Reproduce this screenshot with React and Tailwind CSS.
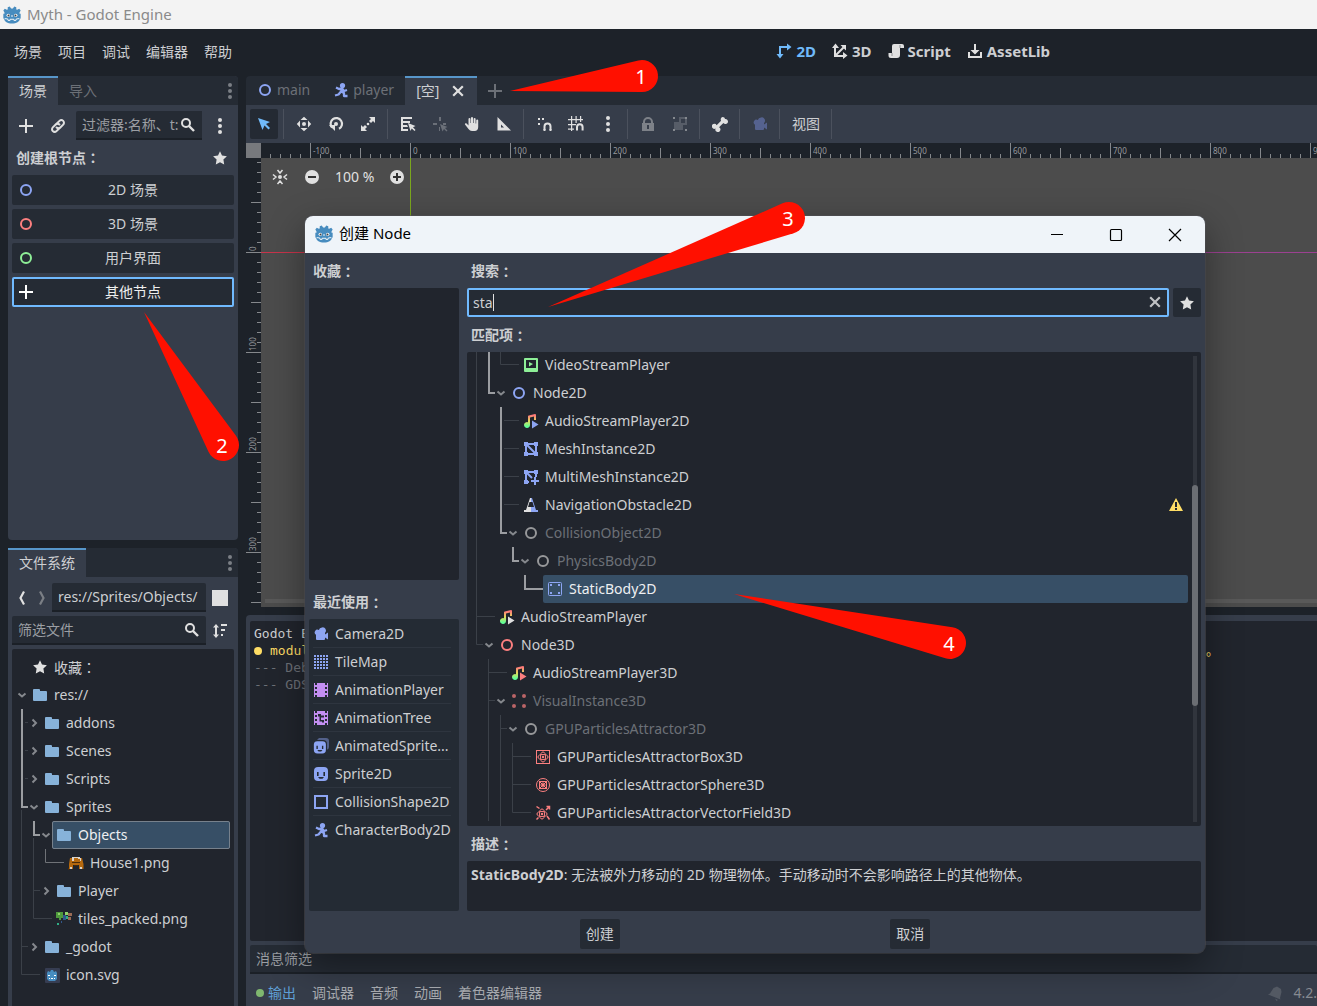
import React from "react";
import clsx from "clsx";

const BLUE = "#8da5f3";
const RED = "#fc7f7f";
const GREEN = "#8eef97";
const PURPLE = "#c38ef1";
const LIGHT = "#e0e0e0";

function Icon({ size = 16, color = LIGHT, className, children }) {
  return (
    <svg
      width={size}
      height={size}
      viewBox="0 0 16 16"
      fill={color}
      className={clsx("shrink-0", className)}
      aria-hidden="true"
    >
      {children}
    </svg>
  );
}

const Ring = ({ color }) => (
  <Icon>
    <circle cx="8" cy="8" r="5" fill="none" stroke={color} strokeWidth="2" />
  </Icon>
);

const Plus = ({ color }) => (
  <Icon color={color}>
    <path d="M7 1v6H1v2h6v6h2V9h6V7H9V1z" />
  </Icon>
);

const Close = ({ color = LIGHT }) => (
  <Icon>
    <path d="M3.2 3.2l9.6 9.6M12.8 3.2l-9.6 9.6" stroke={color} strokeWidth="2.2" />
  </Icon>
);

const Dots = ({ color }) => (
  <Icon color={color}>
    <circle cx="8" cy="2" r="2" />
    <circle cx="8" cy="8" r="2" />
    <circle cx="8" cy="14" r="2" />
  </Icon>
);

const Star = () => (
  <Icon>
    <path d="M8 1.2l2 4.3 4.9.7-3.5 3.4.8 5-4.2-2.3-4.2 2.3.8-5L1.1 6.2 6 5.5z" />
  </Icon>
);

const Search = () => (
  <Icon>
    <circle cx="6" cy="6" r="4" fill="none" stroke={LIGHT} strokeWidth="2" />
    <path d="M9 9l5 5" stroke={LIGHT} strokeWidth="2.4" />
  </Icon>
);

const Chain = () => (
  <Icon>
    <g fill="none" stroke={LIGHT} strokeWidth="2" strokeLinecap="round">
      <path d="M6.600 5.800l2.900-2.900a2.600 2.600 0 0 1 3.700 3.700l-2.900 2.900a2.600 2.600 0 0 1-3.700 0" />
      <path d="M9.400 10.200l-2.900 2.900a2.600 2.600 0 0 1-3.700-3.700l2.900-2.900a2.600 2.600 0 0 1 3.700 0" />
    </g>
  </Icon>
);

const Folder = () => (
  <Icon color="#87b2d9">
    <path d="M1 3a1 1 0 0 1 1-1h5a1 1 0 0 1 1 1v1h6a1 1 0 0 1 1 1v8a1 1 0 0 1-1 1H2a1 1 0 0 1-1-1z" />
  </Icon>
);

const GodotHead = ({ size = 18 }) => (
  <Icon size={size} color="#478cbf">
    <path d="M6 .4l1.200 1.900h1.600L10 .4l1.800.7v1.900l.8.400 1.800-.9 1.300 1.500-1 1.700v1.200h1V11l-.7.400c-.2 2.700-3 4.200-7 4.200S1.200 14.100 1 11.400L.3 11V6.900h1V5.700l-1-1.700 1.300-1.500 1.800.9.800-.4V1.100z" />
    <circle cx="4.700" cy="8.300" r="1.500" fill="#fff" />
    <circle cx="11.300" cy="8.300" r="1.500" fill="#fff" />
    <circle cx="4.900" cy="8.400" r=".9" fill="#414042" />
    <circle cx="11.100" cy="8.400" r=".9" fill="#414042" />
    <path d="M7.600 8h.8v1.800h-.8z" fill="#fff" />
    <path d="M1.500 11.200l2.700.3.300 1.300h1.800v-1h3.400v1h1.800l.3-1.300 2.700-.3" fill="none" stroke="#fff" strokeWidth=".8" />
  </Icon>
);

const Runner = () => (
  <Icon color={BLUE}>
    <circle cx="9.500" cy="3.500" r="2.600" />
    <path
      d="M9.500 5.500L8 10M3 5.500l3 1.500 3-.5 2 2.500 3-1M8 9.500l3 1.500v3h3.500M8 9.500L5.500 12.500 2 13.500"
      fill="none"
      stroke={BLUE}
      strokeWidth="2.300"
      strokeLinejoin="round"
    />
  </Icon>
);

const Camera = ({ color = BLUE }) => (
  <Icon color={color}>
    <path d="M9 1.500a3.200 3.200 0 0 0-3.100 2.600A2.700 2.700 0 1 0 3 8.700V13a1 1 0 0 0 1 1h7a1 1 0 0 0 1-1v-1.500l3 2V6.500l-3 2v-1.600A3.200 3.200 0 0 0 9 1.500z" />
  </Icon>
);

const TileMap = () => (
  <Icon color={BLUE}>
    {[1, 4, 7, 10, 13].map((x) =>
      [1, 4, 7, 10, 13].map((y) => (
        <rect key={x + "-" + y} x={x} y={y} width="2" height="2" />
      ))
    )}
  </Icon>
);

const Film = ({ tree }) => (
  <Icon color={PURPLE}>
    <path
      fillRule="evenodd"
      d="M1 1h1v2h2V1h8v2h2V1h1v14h-1v-2h-2v2H4v-2H2v2H1zM2 5v2h2V5zM2 9v2h2V9zM12 5v2h2V5zM12 9v2h2V9z"
    />
    {tree && (
      <path d="M5 4h3v1.500h3v2H8V10h3v2.500H9v-1H6.500V6.500H5z" fill="#242b34" />
    )}
  </Icon>
);

const Sprite = ({ animated }) => (
  <Icon color={BLUE}>
    {animated && (
      <path d="M6 0h7a3 3 0 0 1 3 3v6a3 3 0 0 1-2 2.800V6a4 4 0 0 0-4-4H4z" opacity=".45" />
    )}
    <g transform={animated ? "translate(0 2.500) scale(.86)" : undefined}>
      <rect x="1" y="1" width="14" height="14" rx="4" />
      <path
        d="M4 6h1.600v4H4zM10.400 6H12v4h-1.600zM5 11h6l-1.500 1.800h-3z"
        fill="#242b34"
      />
    </g>
  </Icon>
);

const CollisionShape = () => (
  <Icon>
    <rect x="2" y="2" width="12" height="12" fill="none" stroke={BLUE} strokeWidth="2" />
  </Icon>
);

const VideoPlayer = () => (
  <Icon color={GREEN}>
    <path
      fillRule="evenodd"
      d="M2 1h12a1 1 0 0 1 1 1v12a1 1 0 0 1-1 1H2a1 1 0 0 1-1-1V2a1 1 0 0 1 1-1zM3 3v8h10V3zM6 5l4 2-4 2.500z"
    />
  </Icon>
);

const AudioPlayer = ({ color = LIGHT }) => (
  <Icon>
    <defs>
      <linearGradient id="note" x1="0" y1="1" x2="0" y2="15" gradientUnits="userSpaceOnUse">
        <stop offset=".1" stopColor="#ff7a7a" />
        <stop offset=".5" stopColor="#e1da5b" />
        <stop offset=".9" stopColor="#5fff97" />
      </linearGradient>
    </defs>
    <path
      fill="url(#note)"
      d="M12 1a1 1 0 0 1 1 1v5h-2V3.500l-4 1V12a3 3 0 1 1-2-2.800V3.600a1 1 0 0 1 .8-1z"
    />
    <path d="M9 7.500l6.500 4L9 15.500z" fill={color} />
  </Icon>
);

const Mesh = ({ multi }) => (
  <Icon color={BLUE}>
    <path
      d={multi ? "M3 3h10v5M3 3v10h3M3 3l6 6" : "M3 3h10v10H3zM3 3l10 10"}
      fill="none"
      stroke={BLUE}
      strokeWidth="2"
    />
    <path d="M1 1h4v4H1zM11 1h4v4h-4zM1 11h4v4H1z" />
    <path d={multi ? "M11 8h2v3h3v2h-3v3h-2v-3H8v-2h3z" : "M11 11h4v4h-4z"} />
  </Icon>
);

const Obstacle = () => (
  <Icon>
    <path d="M7 1h1v12h7v2H1v-2h2z" />
    <path d="M8 1h1l4 12h2v2H8z" fill={BLUE} />
    <path d="M6.500 5h3L11 10H5z" fill="#21252d" />
  </Icon>
);

const StaticBody = () => (
  <Icon color={BLUE}>
    <rect x="1.500" y="1.500" width="13" height="13" rx="1" fill="none" stroke={BLUE} />
    <path d="M3 3h2v2H3zM11 3h2v2h-2zM3 11h2v2H3zM11 11h2v2h-2z" />
  </Icon>
);

const VisualInstance = () => (
  <Icon color="#b96466">
    <circle cx="3" cy="3" r="2" />
    <circle cx="13" cy="3" r="2" />
    <circle cx="3" cy="13" r="2" />
    <circle cx="13" cy="13" r="2" />
  </Icon>
);

const Attractor = ({ kind }) => (
  <Icon>
    <g fill="none" stroke={RED}>
      {kind === "box" && (
        <>
          <rect x="1.500" y="1.500" width="13" height="13" />
          <ellipse cx="8" cy="8" rx="5" ry="2.500" />
          <ellipse cx="8" cy="8" rx="2.500" ry="5" />
        </>
      )}
      {kind === "sphere" && (
        <>
          <circle cx="8" cy="8" r="6.500" />
          <rect x="4.500" y="4.500" width="7" height="7" />
          <path d="M4.500 4.500l7 7M11.500 4.500l-7 7" />
          <circle cx="8" cy="8" r="2" />
        </>
      )}
      {kind === "vector" && (
        <>
          <path d="M1.500 1.500l3 2M11 5l3.500-3.500M11.500 1.500h3v3M12 11l2.500 3.500M1.500 14.500l2-2" strokeWidth="1.500" />
          <ellipse cx="7" cy="9" rx="5" ry="2.500" />
          <ellipse cx="7" cy="9" rx="2.500" ry="5" />
        </>
      )}
    </g>
    <circle cx={kind === "vector" ? 7 : 8} cy={kind === "vector" ? 9 : 8} r="1.200" fill={RED} />
  </Icon>
);

const House = () => (
  <Icon color="#b5690f">
    <path d="M2 3h12l1.500 6v5H11v-4H5v4H1V9z" />
    <path d="M4 2h8v2h-2V3H6v3H4zM12 3h1v3h-1zM2 12h2v2H2zM12 12h2v2h-2z" fill="#d8d3cc" />
    <path d="M0 13h1v2H0zM6 10h4v1H6zM4 7h8v1H4z" fill="#4a2c0c" />
  </Icon>
);

const Tiles = () => (
  <Icon color="#4f9a3d">
    <path d="M0 1h7v6H5v2H3V7H0z" />
    <path d="M2 2h2v2H2zM9 1h3v3H9z" fill="#8fd46a" />
    <path d="M7 4h3v5H7zM5 10h1v2H5z" fill="#31588c" />
    <path d="M12 2h4v3h-4zM12 6h3v3h-3z" fill="#9a6b55" />
    <path d="M10 5h2v3h-2zM1 12h2v2H1z" fill="#2fae86" />
  </Icon>
);

const IconSvg = () => (
  <svg width="16" height="16" viewBox="0 0 16 16" className="shrink-0" aria-hidden="true">
    <rect x="1" y="1" width="15" height="15" rx="1" fill="#363d52" />
    <path d="M3 6l1-2 2 1 1-2h2l1 2 2-1 1 2v6l-2 2H5l-2-2z" fill="#478cbf" />
    <path d="M4 8h2v1H4zM10 8h2v1h-2zM5 11h1v1H5zM7 11h2v1H7zM10 11h1v1h-1z" fill="#fff" />
  </svg>
);

const Chevron = ({ open }) => (
  <svg width="12" height="12" viewBox="0 0 12 12" className="shrink-0" aria-hidden="true">
    <path
      d={open ? "M2.500 4.500L6 7.500l3.500-3" : "M4.500 2.500L8 6 4.500 9.500"}
      fill="none"
      stroke="#85888d"
      strokeWidth="2"
    />
  </svg>
);

const toolIcons = {
  select: (
    <Icon color="#70bafa">
      <path d="M2 2l4.500 12 2-4.500 4 4 1.500-1.500-4-4L14 6z" />
    </Icon>
  ),
  move: (
    <Icon>
      <circle cx="8" cy="8" r="2" />
      <path d="M8 .8L11.500 4h-7zM8 15.200L11.500 12h-7zM.8 8L4 4.500v7zM15.200 8L12 4.500v7z" />
    </Icon>
  ),
  rotate: (
    <Icon>
      <path d="M4 11.500A5.700 5.700 0 1 1 11 12.800" fill="none" stroke={LIGHT} strokeWidth="2.200" />
      <path d="M1 9h6v6z" />
      <circle cx="8" cy="8" r="2" />
    </Icon>
  ),
  scale: (
    <Icon>
      <path d="M9 1h6v6l-2-2-2 2-2-2 2-2zM7 15H1V9l2 2 2-2 2 2-2 2z" />
      <circle cx="8" cy="8" r="1.300" />
    </Icon>
  ),
  list: (
    <Icon>
      <path d="M1 1h11v2H3v2h7v2H3v2h4l1 2H3v2h5v2H1z" />
      <path d="M8 7l7.500 3-2.500 1.200 2.500 2.800-1 1-2.800-2.500L10.500 15z" />
    </Icon>
  ),
  pivot: (
    <Icon color="#6b7079">
      <path d="M7 1h2v4H7zM1 7h4v2H1zM11 7h3v2h-3zM7 11h1v4H7z" />
      <path d="M8 8l7.500 3-2.500 1 2.500 2.500-1 1L12 13l-1.500 2.500z" />
    </Icon>
  ),
  pan: (
    <Icon>
      <path d="M7 2a1 1 0 0 1 2 0v5h.6V3a1 1 0 0 1 2 0v4.500h.6V4.500a1 1 0 0 1 2 0V11c0 2.500-1.500 4-3.500 4H8c-1.500 0-2.500-.7-3.500-2L1 8.500c-.5-1 .8-1.800 1.600-1L4.500 9.500V3a1 1 0 0 1 2 0v4H7z" />
    </Icon>
  ),
  ruler: (
    <Icon>
      <path fillRule="evenodd" d="M1.500 1L15 14.500H1.500zM5 8.500v3h3z" />
    </Icon>
  ),
  snap: (
    <Icon>
      <path d="M2 2h2v2H2zM6 2h2v2H6zM2 7h2v2H2z" />
      <path d="M8.500 14V10.500a3 3 0 0 1 6 0V14" fill="none" stroke={LIGHT} strokeWidth="2" />
      <path d="M7.500 13h2v2h-2zM13.500 13h2v2h-2z" />
    </Icon>
  ),
  gridSnap: (
    <Icon>
      <path d="M0 3h15v1.200H0zM0 8h8v1.200H0zM0 12.500h6v1.200H0zM3 0h1.200v15H3zM7.500 0h1.200v7H7.500zM12 0h1.200v6H12z" />
      <path d="M9 14.500V11a2.800 2.800 0 0 1 5.600 0v3.500" fill="none" stroke={LIGHT} strokeWidth="2" />
    </Icon>
  ),
  more: <Dots />,
  lock: (
    <Icon color="#7d8188">
      <path
        fillRule="evenodd"
        d="M8 1a5 5 0 0 0-5 5v1H2v8h12V7h-1V6a5 5 0 0 0-5-5zm0 2a3 3 0 0 1 3 3v1H5V6a3 3 0 0 1 3-3zM7 9h2v4H7z"
      />
    </Icon>
  ),
  group: (
    <Icon color="#575d68">
      <path d="M7 1h8v8h-4v5H2V6h5zM9 3v4h4V3z" fillRule="evenodd" />
      <path d="M1 1h2v2H1zM13 1h2v2h-2zM1 13h2v2H1zM13 13h2v2h-2z" fill="#85898f" />
    </Icon>
  ),
  bone: (
    <Icon>
      <path d="M10.500 1a2.500 2.500 0 0 0-1.400 3.700L4.600 9.200a2.500 2.500 0 1 0-1 3.300 2.500 2.500 0 1 0 3.400-1.200l4.400-4.400a2.500 2.500 0 1 0 1.700-3.900A2.500 2.500 0 0 0 10.500 1z" />
    </Icon>
  ),
  camera: <Camera color="#55628f" />,
};

const TOOLS = [
  ["select"],
  ["move", "rotate", "scale"],
  ["list", "pivot", "pan", "ruler"],
  ["snap", "gridSnap", "more"],
  ["lock", "group"],
  ["bone"],
  ["camera"],
];

function Separator() {
  return (
    <span className="flex h-[30px] w-1 shrink-0 pl-px">
      <span className="w-px bg-[#4b515d]" />
    </span>
  );
}

// Full-width colon that sits in the middle of its cell.
function Colon() {
  return <span className="font-['Noto_Sans_CJK_TC',sans-serif]">：</span>;
}

function TreeRow({ item }) {
  return (
    <li className="flex h-7 items-center" style={{ paddingLeft: 4 + item.depth * 12 }}>
      <span className="w-3 shrink-0">
        {item.arrow && <Chevron open={item.arrow === "open"} />}
      </span>
      <span
        className={clsx(
          "flex h-full min-w-0 flex-1 items-center gap-1.5 whitespace-nowrap rounded-xs pl-1",
          item.selected && "bg-[#374f66] text-[#eef0f2]",
          item.outlined && "outline -outline-offset-1 outline-[#77818c]",
          item.dim && "text-[#6c7077]"
        )}
      >
        {item.icon}
        <span>
          {item.label}
          {item.colon && <Colon />}
        </span>
        {item.warning && (
          <Icon color="#ffdd65" className="ml-auto mr-1">
            <path fillRule="evenodd" d="M8 1l7 13H1zM7 5v5h2V5zM7 11v2h2v-2z" />
          </Icon>
        )}
      </span>
    </li>
  );
}

function Tree({ items, thin, mid, thick }) {
  return (
    <div className="relative min-w-0 flex-1">
      <svg className="absolute inset-0 h-full w-full" fill="none" aria-hidden="true">
        <path d={thin} stroke="#3b4048" />
        {mid && <path d={mid} stroke="#6f7277" />}
        <path d={thick} stroke="#9b9da1" strokeWidth="2" />
      </svg>
      <ul className="relative">
        {items.map((item) => (
          <TreeRow key={item.label} item={item} />
        ))}
      </ul>
    </div>
  );
}

const FILES = [
  { depth: 0, label: "收藏", icon: <Star />, colon: true },
  { depth: 0, label: "res://", icon: <Folder />, arrow: "open" },
  { depth: 1, label: "addons", icon: <Folder />, arrow: "closed" },
  { depth: 1, label: "Scenes", icon: <Folder />, arrow: "closed" },
  { depth: 1, label: "Scripts", icon: <Folder />, arrow: "closed" },
  { depth: 1, label: "Sprites", icon: <Folder />, arrow: "open" },
  { depth: 2, label: "Objects", icon: <Folder />, arrow: "open", selected: true, outlined: true },
  { depth: 3, label: "House1.png", icon: <House /> },
  { depth: 2, label: "Player", icon: <Folder />, arrow: "closed" },
  { depth: 2, label: "tiles_packed.png", icon: <Tiles /> },
  { depth: 1, label: "_godot", icon: <Folder />, arrow: "closed" },
  { depth: 1, label: "icon.svg", icon: <IconSvg /> },
];

const NODES = [
  { depth: 3, label: "VideoStreamPlayer", icon: <VideoPlayer /> },
  { depth: 2, label: "Node2D", icon: <Ring color={BLUE} />, arrow: "open" },
  { depth: 3, label: "AudioStreamPlayer2D", icon: <AudioPlayer color={BLUE} /> },
  { depth: 3, label: "MeshInstance2D", icon: <Mesh /> },
  { depth: 3, label: "MultiMeshInstance2D", icon: <Mesh multi /> },
  { depth: 3, label: "NavigationObstacle2D", icon: <Obstacle />, warning: true },
  { depth: 3, label: "CollisionObject2D", icon: <Ring color="#97989a" />, arrow: "open", dim: true },
  { depth: 4, label: "PhysicsBody2D", icon: <Ring color="#97989a" />, arrow: "open", dim: true },
  { depth: 5, label: "StaticBody2D", icon: <StaticBody />, selected: true },
  { depth: 1, label: "AudioStreamPlayer", icon: <AudioPlayer /> },
  { depth: 1, label: "Node3D", icon: <Ring color={RED} />, arrow: "open" },
  { depth: 2, label: "AudioStreamPlayer3D", icon: <AudioPlayer color={RED} /> },
  { depth: 2, label: "VisualInstance3D", icon: <VisualInstance />, arrow: "open", dim: true },
  { depth: 3, label: "GPUParticlesAttractor3D", icon: <Ring color="#97989a" />, arrow: "open", dim: true },
  { depth: 4, label: "GPUParticlesAttractorBox3D", icon: <Attractor kind="box" /> },
  { depth: 4, label: "GPUParticlesAttractorSphere3D", icon: <Attractor kind="sphere" /> },
  { depth: 4, label: "GPUParticlesAttractorVectorField3D", icon: <Attractor kind="vector" /> },
];

const RECENT = [
  { label: "Camera2D", icon: <Camera /> },
  { label: "TileMap", icon: <TileMap /> },
  { label: "AnimationPlayer", icon: <Film /> },
  { label: "AnimationTree", icon: <Film tree /> },
  { label: "AnimatedSprite...", icon: <Sprite animated /> },
  { label: "Sprite2D", icon: <Sprite /> },
  { label: "CollisionShape2D", icon: <CollisionShape /> },
  { label: "CharacterBody2D", icon: <Runner /> },
];

function TitleBar() {
  return (
    <header className="flex h-[29px] shrink-0 items-center gap-1.5 bg-[#f3f3f3] px-[3px] text-[15px] text-[#8a8a8a]">
      <GodotHead />
      <h1>Myth - Godot Engine</h1>
    </header>
  );
}

function MenuBar() {
  const modes = [
    {
      label: "2D",
      active: true,
      icon: (
        <Icon color="#70bafa">
          <path d="M3 11V3h8V0.500l4.500 3.500L11 7.500V5H5v6h2.500L4 15.500.5 11z" />
        </Icon>
      ),
    },
    {
      label: "3D",
      icon: (
        <Icon>
          <path d="M3 5v8h8M3.500 12.500l8-8" fill="none" stroke={LIGHT} strokeWidth="2" />
          <path d="M3.500.5L7 5H0zM15.500 12.500L11 9v7zM14 2v5.500L8.500 2z" />
        </Icon>
      ),
    },
    {
      label: "Script",
      icon: (
        <Icon>
          <path d="M6 1h8a2 2 0 0 1 2 2v2h-4v7a3 3 0 0 1-3 3H3a2.500 2.500 0 0 1-2.500-2.500V10H4V3a2 2 0 0 1 2-2z" />
          <path d="M12 2v3M4 10v3" stroke="#8f9195" />
        </Icon>
      ),
    },
    {
      label: "AssetLib",
      icon: (
        <Icon>
          <path d="M7 1h2v6h3.500L8 11.500 3.500 7H7z" />
          <path d="M2 9v5h12V9" fill="none" stroke={LIGHT} strokeWidth="2" />
        </Icon>
      ),
    },
  ];

  return (
    <div className="flex h-[47px] shrink-0 items-center whitespace-nowrap pb-0.5">
      <nav className="flex gap-4 pl-3.5">
        {["场景", "项目", "调试", "编辑器", "帮助"].map((item) => (
          <button key={item}>{item}</button>
        ))}
      </nav>
      <nav className="ml-auto mr-[267px] flex gap-4 text-[15px] font-bold">
        {modes.map((mode) => (
          <button
            key={mode.label}
            className={clsx("flex items-center gap-1", mode.active && "text-[#70bafa]")}
          >
            {mode.icon}
            {mode.label}
          </button>
        ))}
      </nav>
    </div>
  );
}

function DockTabs({ tabs }) {
  return (
    <div className="flex h-[29px] shrink-0 items-stretch rounded-t-sm bg-[#252b34]">
      {tabs.map((tab, i) => (
        <button
          key={tab}
          className={clsx(
            "border-t-2 px-[11px] pb-0.5",
            i === 0 ? "border-[#5796c9] bg-[#363d4a]" : "border-transparent text-[#6c7077]"
          )}
        >
          {tab}
        </button>
      ))}
      <button aria-label="菜单" className="ml-auto">
        <Dots color="#7b7f85" />
      </button>
    </div>
  );
}

const field =
  "h-[29px] w-full min-w-0 rounded-t-xs border-b-2 border-[#1b2027] bg-[#252b34] px-1.5 outline-none placeholder:text-[#9b9ea3]";

function SceneDock() {
  const roots = [
    { label: "2D 场景", icon: <Ring color={BLUE} /> },
    { label: "3D 场景", icon: <Ring color={RED} /> },
    { label: "用户界面", icon: <Ring color={GREEN} /> },
    { label: "其他节点", icon: <Plus color="#ffffff" />, focused: true },
  ];

  return (
    <section className="flex min-h-0 flex-[464_1_0%] flex-col rounded-sm bg-[#363d4a]">
      <DockTabs tabs={["场景", "导入"]} />
      <div className="flex items-center gap-4 px-2.5 pt-1.5">
        <button aria-label="添加">
          <Plus />
        </button>
        <button aria-label="实例化">
          <Chain />
        </button>
        <div className="relative -ml-1.5 min-w-0 flex-1">
          <input aria-label="过滤器" placeholder="过滤器:名称、t:" className={field} />
          <span className="absolute right-0 top-0 flex h-[27px] w-[22px] items-center bg-[#252b34]">
            <Search />
          </span>
        </div>
        <button aria-label="更多" className="-ml-1.5">
          <Dots />
        </button>
      </div>
      <div className="flex h-[35px] items-center justify-between pl-2 pr-2.5 font-bold">
        <h2>
          创建根节点
          <Colon />
        </h2>
        <Star />
      </div>
      <div className="flex flex-col gap-1 px-1">
        {roots.map((root) => (
          <button
            key={root.label}
            className={clsx(
              "flex h-[30px] items-center rounded-xs border-2 bg-[#252b34] px-1",
              root.focused ? "border-[#70baff] text-[#eeeeee]" : "border-[#252b34]"
            )}
          >
            {root.icon}
            <span className="flex-1 pl-1">{root.label}</span>
          </button>
        ))}
      </div>
    </section>
  );
}

function FileDock() {
  return (
    <section className="flex min-h-0 flex-[458_1_0%] flex-col rounded-t-sm bg-[#363d4a]">
      <DockTabs tabs={["文件系统"]} />
      <div className="flex items-center gap-1 px-1 pt-1.5">
        <button aria-label="后退" className="w-4">
          <Icon>
            <path d="M12 1.500L8.500 8l3.500 6.500" fill="none" stroke={LIGHT} strokeWidth="2.200" />
          </Icon>
        </button>
        <button aria-label="前进" className="w-4">
          <Icon>
            <path d="M8 1.500L11.500 8 8 14.500" fill="none" stroke="#7b7f85" strokeWidth="2.200" />
          </Icon>
        </button>
        <input aria-label="路径" defaultValue="res://Sprites/Objects/" className={field} />
        <button aria-label="分栏" className="ml-0.5 mr-1.5">
          <Icon>
            <rect width="16" height="16" />
          </Icon>
        </button>
      </div>
      <div className="flex items-center gap-1 px-1 pt-1">
        <div className="relative min-w-0 flex-1">
          <input aria-label="筛选文件" placeholder="筛选文件" className={field} />
          <span className="absolute right-1.5 top-1.5">
            <Search />
          </span>
        </div>
        <button aria-label="排序" className="ml-0.5 mr-1.5">
          <Icon>
            <path d="M4 1l3 3.500H5v7h2L4 15l-3-3.500h2v-7H1zM9 1h6v2H9zM9 6h4v2H9zM9 11h2v2H9z" />
          </Icon>
        </button>
      </div>
      <div className="mx-1 mt-1 flex min-h-0 flex-1 overflow-hidden rounded-t-xs bg-[#21252d] pr-1 pt-1">
        <Tree
          items={FILES}
          thin="M9.500 157V321.500H28M9.500 293.500H16M13 69.500H16M13 97.500H16M13 125.500H16M21.500 185V265.500H40M21.500 237.500H28"
          mid="M33.500 196V209.500H52"
          thick="M10 56V154H16M22 168V182H28"
        />
      </div>
    </section>
  );
}

function Canvas() {
  const xs = Array.from({ length: 110 }, (_, i) => i - 14);
  const ys = Array.from({ length: 46 }, (_, i) => i - 9);
  const tick = (n) => (n % 10 === 0 ? 15 : n % 5 === 0 ? 10 : 4);

  return (
    <div className="relative min-h-0 flex-1 overflow-hidden bg-[#4c4c4c]">
      <svg className="absolute inset-0 h-full w-full" aria-hidden="true">
        <path d="M164.500 15V500" stroke="#7ba71d" />
        <path d="M15 109.500H164" stroke="#c8344b" />
        <path d="M164 109.500H1200" stroke="#9c4191" />
        <rect width="2000" height="15" fill="#1d2229" />
        <rect width="15" height="1000" fill="#1d2229" />
        <g stroke="#85888c">
          {xs.map((n) => (
            <path key={n} d={`M${164.5 + n * 10} ${15 - tick(n)}V15`} />
          ))}
          {ys.map((n) => (
            <path key={n} d={`M${15 - tick(n)} ${109.5 + n * 10}H15`} />
          ))}
        </g>
        <g fill="#96989c" fontSize="8">
          {xs.filter((n) => n % 10 === 0).map((n) => (
            <text key={n} x={167 + n * 10} y="11">
              {n * 10}
            </text>
          ))}
          {ys.filter((n) => n >= 0 && n % 10 === 0).map((n) => (
            <text key={n} transform={`translate(10 ${108 + n * 10}) rotate(-90)`}>
              {n * 10}
            </text>
          ))}
        </g>
        <rect width="15" height="15" fill="#77797d" />
      </svg>
      <div className="absolute bottom-1 left-[19px] right-0 h-1 bg-[#595959]" />
      <div className="absolute left-[26px] top-6 flex items-center gap-4 text-[#e0e0e0]">
        <button aria-label="居中">
          <Icon>
            <circle cx="8" cy="8" r="2" />
            <path
              d="M5.500 1L8 4l2.500-3M5.500 15L8 12l2.500 3M1 5.500L4 8l-3 2.500M15 5.500L12 8l3 2.500"
              fill="none"
              stroke={LIGHT}
              strokeWidth="1.500"
            />
          </Icon>
        </button>
        <button aria-label="缩小">
          <Icon>
            <circle cx="8" cy="8" r="7" />
            <path d="M4 7h8v2H4z" fill="#333" />
          </Icon>
        </button>
        <button className="-mx-px">100 %</button>
        <button aria-label="放大">
          <Icon>
            <circle cx="8" cy="8" r="7" />
            <path d="M4 7h8v2H4zM7 4h2v8H7z" fill="#333" />
          </Icon>
        </button>
      </div>
    </div>
  );
}

function Viewport() {
  return (
    <section className="flex min-h-0 flex-[531_1_0%] flex-col">
      <div className="flex h-[29px] shrink-0 items-stretch rounded-tl-sm bg-[#252b34] text-[#6c7077]">
        <button className="flex items-center gap-1 pb-0.5 pl-[11px] pr-3">
          <Ring color={BLUE} />
          main
        </button>
        <button className="flex items-center gap-1 px-[11px] pb-0.5">
          <Runner />
          player
        </button>
        <div className="flex items-center gap-[11px] border-t-2 border-[#5796c9] bg-[#363d4a] px-[11px] pb-0.5 text-[#cdcfd2]">
          <button>[空]</button>
          <button aria-label="关闭">
            <Close />
          </button>
        </div>
        <button aria-label="新建场景" className="px-2.5">
          <Plus color="#6c7077" />
        </button>
      </div>
      <div className="flex h-[38px] shrink-0 items-center gap-1 bg-[#363d4a] px-1">
        {TOOLS.map((group) => (
          <React.Fragment key={group[0]}>
            {group.map((tool) => (
              <button
                key={tool}
                aria-label={tool}
                className={clsx(
                  "flex h-[30px] w-7 items-center justify-center rounded-xs",
                  tool === "select" && "bg-[#242a33]"
                )}
              >
                {toolIcons[tool]}
              </button>
            ))}
            <Separator />
          </React.Fragment>
        ))}
        <button className="px-1.5">视图</button>
        <Separator />
      </div>
      <Canvas />
    </section>
  );
}

function OutputPanel() {
  return (
    <section className="flex min-h-0 flex-[391_1_0%] flex-col rounded-tl-sm bg-[#363d4a] pl-1">
      <div className="mt-1.5 min-h-0 flex-1 rounded-l-xs bg-[#21252d] px-1 pt-1 font-['DejaVu_Sans_Mono','Noto_Sans_CJK_SC',monospace] text-[13px] leading-[17px]">
        <p>Godot E</p>
        <p className="flex items-center text-[#ffdd65]">
          <span className="mr-2 h-2 w-2 rounded-full bg-[#ffdd65]" />
          modul
          <span className="ml-auto mr-[94px]">。</span>
        </p>
        <p className="text-[#6c7077]">--- Deb</p>
        <p className="text-[#6c7077]">--- GDS</p>
      </div>
      <div className="pt-1">
        <input aria-label="消息筛选" placeholder="消息筛选" className={field} />
      </div>
      <div className="flex h-8 shrink-0 items-center gap-4 pb-px pl-1.5 pt-1.5 text-[#a9acb1]">
        <button className="flex items-center gap-1 text-[#5f9fd6]">
          <span className="h-2 w-2 rounded-full bg-[#7fb76f]" />
          输出
        </button>
        {["调试器", "音频", "动画", "着色器编辑器"].map((tab) => (
          <button key={tab}>{tab}</button>
        ))}
        <span className="ml-auto flex items-center gap-2.5 text-[#868a91]">
          <Icon color="#535963">
            <path d="M10 1.500l4 2.500.5 3-1.500 6 .5 1.500L1 9.500l2-1 3.500-5.500L9 2zM8 13.500l3 1.500-1.500 1z" />
          </Icon>
          4.2.
        </span>
      </div>
    </section>
  );
}

const label = "flex h-[35px] shrink-0 items-center px-1 font-bold";

function CreateDialog() {
  return (
    <div
      role="dialog"
      aria-labelledby="dialog-title"
      className="absolute left-[305px] top-[216px] flex h-[737px] w-[900px] flex-col rounded-lg bg-[#363d4a] shadow-[0_12px_36px_rgba(0,0,0,0.4),0_0_0_1px_rgba(90,90,95,0.6)]"
    >
      <div className="flex h-[37px] shrink-0 items-center rounded-t-lg bg-[#eff4f9] pb-0.5 pl-2.5 pr-5 text-black">
        <GodotHead />
        <h2 id="dialog-title" className="pl-1.5 text-[15px]">
          创建 Node
        </h2>
        <div className="ml-auto flex gap-[39px]">
          <button aria-label="最小化">
            <svg width="20" height="20" fill="none" stroke="#000">
              <path d="M4 10.500h12" />
            </svg>
          </button>
          <button aria-label="最大化">
            <svg width="20" height="20" fill="none" stroke="#000" strokeWidth="1.200">
              <rect x="4.500" y="5.500" width="11" height="11" rx="1" />
            </svg>
          </button>
          <button aria-label="关闭">
            <svg width="20" height="20" fill="none" stroke="#000" strokeWidth="1.200">
              <path d="M4 5l12 12M16 5L4 17" />
            </svg>
          </button>
        </div>
      </div>

      <div className="flex min-h-0 flex-1 gap-2 px-1">
        <div className="flex w-[150px] shrink-0 flex-col">
          <h3 className={label}>
            收藏
            <Colon />
          </h3>
          <div className="flex-1 rounded-xs bg-[#21252d]" />
          <h3 className={clsx(label, "mt-1")}>
            最近使用
            <Colon />
          </h3>
          <div className="flex-1 rounded-xs bg-[#242b34]">
            <ul className="pl-1 pr-2 pt-px">
              {RECENT.map((item, i) => (
                <li
                  key={item.label}
                  className={clsx(
                    "flex h-7 items-center gap-1.5 whitespace-nowrap",
                    i < RECENT.length - 1 && "border-b border-[#2e353f]"
                  )}
                >
                  {item.icon}
                  {item.label}
                </li>
              ))}
            </ul>
          </div>
        </div>

        <div className="flex min-w-0 flex-1 flex-col">
          <label htmlFor="node-search" className={label}>
            搜索
            <Colon />
          </label>
          <div className="flex gap-1">
            <div className="relative min-w-0 flex-1">
              <input
                id="node-search"
                defaultValue="sta"
                className="h-[29px] w-full rounded-xs border-2 border-[#70baff] bg-[#252b34] px-1 pb-px outline-none"
              />
              <span className="absolute left-[26px] top-1.5 h-[17px] w-px bg-[#e0e0e0]" />
              <button aria-label="清除" className="absolute right-1.5 top-1.5">
                <Close color="#bfc1c4" />
              </button>
            </div>
            <button
              aria-label="收藏"
              className="flex h-[29px] w-7 items-center justify-center rounded-xs bg-[#252b34]"
            >
              <Star />
            </button>
          </div>
          <h3 className={label}>
            匹配项
            <Colon />
          </h3>
          <div className="flex min-h-0 flex-1 overflow-hidden rounded-xs bg-[#21252d]">
            <div className="-mt-px flex min-w-0 flex-1">
              <Tree
                items={NODES}
                thin="M9.500 0V293.500H16M9.500 265.500H28M33.500 0V13.500H52M37 69.500H52M37 97.500H52M37 125.500H52M37 153.500H52M21.500 308V470M21.500 321.500H40M21.500 349.500H28M33.500 364V475M33.500 377.500H40M45.500 392V461.500H64M45.500 405.500H64M45.500 433.500H64"
                thick="M22 0V42H28M34 56V182H40M46 196V210H52M58 224V238H76"
              />
            </div>
            <div className="flex w-[13px] flex-col items-center py-1 pl-px">
              <div className="w-1 flex-[129_1_0%] bg-[#31353d]" />
              <div className="w-1.5 flex-[221_1_0%] rounded-full bg-[#6b6e73]" />
              <div className="w-1 flex-[116_1_0%] bg-[#31353d]" />
            </div>
          </div>
          <h3 className={label}>
            描述
            <Colon />
          </h3>
          <p className="h-[50px] shrink-0 rounded-xs bg-[#21252d] px-1 pt-1">
            <b>StaticBody2D</b>: 无法被外力移动的 2D 物理物体。手动移动时不会影响路径上的其他物体。
          </p>
        </div>
      </div>

      <div className="flex justify-evenly px-1 pb-1 pt-2">
        <button className="h-[30px] rounded-xs bg-[#252b34] px-1.5">创建</button>
        <button className="h-[30px] rounded-xs bg-[#252b34] px-1.5">取消</button>
      </div>
    </div>
  );
}

const CALLOUTS = [
  { n: 1, tip: [510, 91], at: [642, 76] },
  { n: 2, tip: [144, 312], at: [223, 445] },
  { n: 3, tip: [548, 307], at: [789, 218] },
  { n: 4, tip: [734, 594], at: [950, 643] },
];

// Teardrop: two tangents from the tip to a circle of radius r.
function teardrop([tx, ty], [cx, cy], r) {
  const d = Math.hypot(cx - tx, cy - ty);
  const back = Math.atan2(ty - cy, tx - cx);
  const a = Math.acos(r / d);
  const p = (t) => `${cx + r * Math.cos(t)} ${cy + r * Math.sin(t)}`;
  return `M${tx} ${ty}L${p(back + a)}A${r} ${r} 0 1 1 ${p(back - a)}Z`;
}

function Callouts() {
  return (
    <svg className="pointer-events-none absolute inset-0 h-full w-full">
      {CALLOUTS.map(({ n, tip, at }) => (
        <g key={n}>
          <path d={teardrop(tip, at, 16)} fill="#ff1000" />
          <text x={at[0] - 1} y={at[1] + 8} fontSize="20" fill="#fff" textAnchor="middle">
            {n}
          </text>
        </g>
      ))}
    </svg>
  );
}

export default function App() {
  return (
    <div className="relative flex h-screen flex-col overflow-hidden bg-[#1d2229] font-['Noto_Sans','Noto_Sans_CJK_SC',sans-serif] text-sm text-[#cdcfd2]">
      <TitleBar />
      <MenuBar />
      <main className="flex min-h-0 flex-1 gap-2 pl-2">
        <div className="flex w-[230px] shrink-0 flex-col gap-2">
          <SceneDock />
          <FileDock />
        </div>
        <div className="flex min-w-0 flex-1 flex-col gap-2">
          <Viewport />
          <OutputPanel />
        </div>
      </main>
      <CreateDialog />
      <Callouts />
    </div>
  );
}
